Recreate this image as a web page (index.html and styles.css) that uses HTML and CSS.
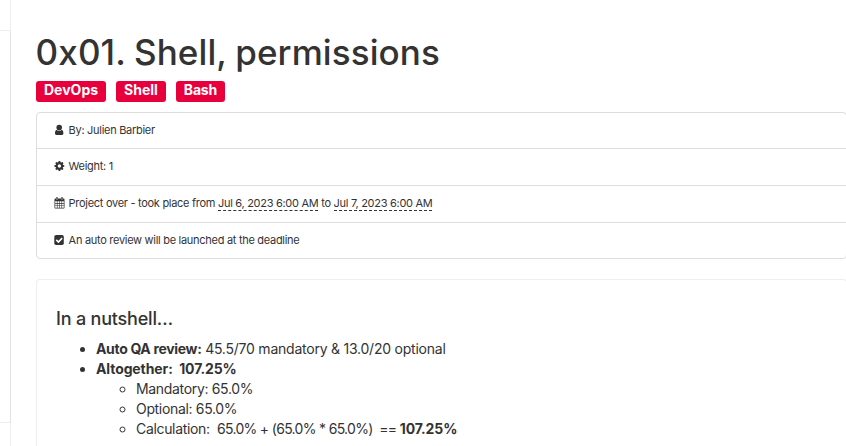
FILE: index.html
```html
<!DOCTYPE html>
<html lang="en">
<head>
<meta charset="utf-8">
<title>0x01. Shell, permissions</title>
<link rel="stylesheet" href="styles.css">
</head>
<body>
<div class="layout">
  <aside class="sidebar"><div class="sidebar-top"></div><div class="sidebar-middle"></div><div class="sidebar-bottom"></div></aside>
  <main class="content">
    <h1>0x01. Shell, permissions</h1>
    <div class="tags"><span class="tag">DevOps</span><span class="tag">Shell</span><span class="tag tag-tight">Bash</span></div>
    <ul class="meta">
      <li><svg class="icon" viewBox="0 0 11 12"><path d="M5.200 .8a2.800 2.800 0 0 1 2.800 2.800C8 5.300 6.700 6.600 5.200 6.600S2.400 5.300 2.400 3.600A2.800 2.800 0 0 1 5.200 .8zM2.700 5.800c.7.8 1.500 1.200 2.500 1.200S7 6.600 7.700 5.800c1.200.3 1.700 1.700 1.700 3.400C9.400 10.400 8.700 11 7.700 11H2.700c-1 0-1.700-.6-1.700-1.800C1 7.500 1.500 6.100 2.700 5.800z"/></svg><span>By: Julien Barbier</span></li>
      <li><svg class="icon" viewBox="0 0 11 12"><path fill-rule="evenodd" d="M4.600 1h1.600l.3 1.300.7.300 1.200-.7 1.100 1.100-.7 1.200.3.700 1.200.3v1.600l-1.200.3-.3.700.7 1.200-1.100 1.100-1.200-.7-.7.300L6.200 11H4.600l-.3-1.300-.7-.3-1.200.7L1.300 9l.7-1.200-.3-.7L.4 6.800V5.200l1.300-.3.300-.7L1.300 3l1.100-1.100 1.200.7.700-.3zM5.400 4.300a1.700 1.700 0 1 0 0 3.400 1.700 1.700 0 0 0 0-3.400z"/></svg><span>Weight: 1</span></li>
      <li><svg class="icon" viewBox="0 0 11 12"><path fill-rule="evenodd" d="M1.300 1.600H2V1q0-.7.700-.7h.6q.7 0 .7.700v.6h3V1q0-.7.700-.7h.6q.7 0 .7.700v.6h.7q.8 0 .8.800v8.200q0 .9-.8.900H1.300q-.8 0-.8-.9V2.400q0-.8.800-.8zM1.200 4.300v1.800h1.700V4.300zm2.300 0v1.800h1.700V4.300zm2.300 0v1.800h1.700V4.300zm2.300 0v1.800h1.700V4.300zM1.200 6.700v1.700h1.700V6.700zm2.300 0v1.700h1.700V6.700zm2.300 0v1.700h1.700V6.700zm2.300 0v1.700h1.700V6.700zM1.200 9v1.700h1.700V9zm2.300 0v1.700h1.700V9zm2.300 0v1.700h1.700V9zm2.300 0v1.700h1.700V9zM2.700 1v1.900h.6V1zm5 0v1.900h.6V1z"/></svg><span>Project over - took place from <span class="date">Jul 6, 2023 6:00 AM</span> to <span class="date">Jul 7, 2023 6:00 AM</span></span></li>
      <li><svg class="icon" viewBox="0 0 11 12"><rect x=".3" y="1" width="9.500" height="10" rx="1.800"/><path class="check" d="M2.300 5.900l2.100 2.100 3.700-3.900"/></svg><span>An auto review will be launched at the deadline</span></li>
    </ul>
    <section class="panel">
      <h2>In a nutshell…</h2>
      <ul class="summary">
        <li><b class="label">Auto QA review:</b> <span class="score">45.5/70 mandatory &amp; 13.0/20 optional</span></li>
        <li><b>Altogether:&nbsp; 107.25%</b>
          <ul>
            <li>Mandatory: 65.0%</li>
            <li>Optional: 65.0%</li>
            <li>Calculation:&nbsp; <span class="formula">65.0% + (65.0% * 65.0%)&nbsp; == </span><b>107.25%</b></li>
          </ul>
        </li>
      </ul>
    </section>
  </main>
</div>
</body>
</html>
```
FILE: styles.css
```css
* { box-sizing: border-box; }
body {
  margin: 0;
  height: 446px;
  overflow: hidden;
  background: #fff;
  color: #333;
  font: 14px/20px Inter, "Liberation Sans", sans-serif;
}
.layout { display: flex; height: 446px; }
.sidebar { width: 11px; flex: none; display: flex; flex-direction: column; }
.sidebar-top { height: 31px; border-right: 1px solid #eee; border-bottom: 1px solid #eee; }
.sidebar-middle { height: 392px; border-right: 1px solid #e2e2e2; border-bottom: 1px solid #eee; }
.sidebar-bottom { flex: 1; border-right: 1px solid #eee; }
.content { display: flex; flex-direction: column; width: 811px; height: 446px; margin-left: 25px; flex: none; }
h1 {
  margin: 32px 0 0 -0.4px;
  font-size: 35px;
  line-height: 40px;
  font-weight: 500;
  letter-spacing: 0.1px;
  word-spacing: -1px;
  white-space: nowrap;
}
.tags { display: flex; gap: 10px; margin-top: 9px; }
.tag {
  height: 21px;
  padding: 0 8px;
  border-radius: 3px;
  background: #e8003d;
  color: #fff;
  font-weight: 700;
  line-height: 18px;
}
.tag-tight { letter-spacing: -0.2px; }
.meta {
  list-style: none;
  margin: 10px 0 0;
  padding: 0;
  border: 1px solid #ddd;
  border-radius: 4px;
  font-size: 11px;
  letter-spacing: -0.29px;
}
.meta li {
  display: flex;
  align-items: center;
  height: 37px;
  padding: 0 0 2px 17px;
  border-bottom: 1px solid #ddd;
  white-space: nowrap;
}
.meta li:first-child { height: 36px; }
.meta li:last-child { height: 35px; border-bottom: 0; }
.icon { width: 11px; height: 12px; margin-right: 3.6px; fill: #333; flex: none; }
.check { fill: none; stroke: #fff; stroke-width: 1.6; }
.date { display: inline-block; line-height: 14px; border-bottom: 1px dashed #333; }
.panel {
  flex: 1;
  min-height: 0;
  margin-top: 20px;
  padding: 29px 19px 0;
  border: 1px solid #eee;
  border-bottom: 0;
  border-radius: 4px 4px 0 0;
}
h2 { margin: 0; font-size: 18px; line-height: 20px; font-weight: 500; letter-spacing: -0.2px; }
.summary { margin: 10px 0 0; padding-left: 40px; letter-spacing: -0.33px; white-space: nowrap; }
.summary ul { margin: 0; padding-left: 40px; }
.summary b { letter-spacing: -0.1px; }
.summary .label { letter-spacing: -0.33px; }
.score { letter-spacing: -0.23px; }
.formula { letter-spacing: -0.68px; }
```
